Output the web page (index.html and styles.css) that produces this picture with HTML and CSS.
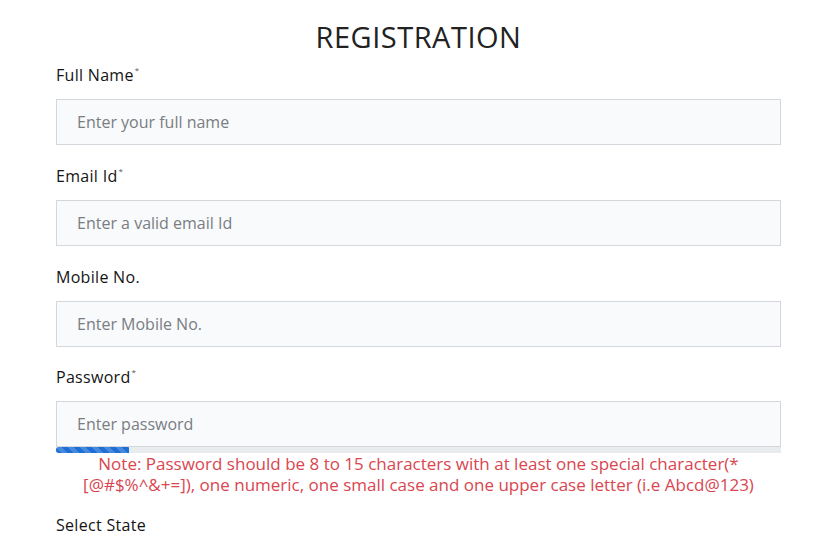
FILE: index.html
```html
<!DOCTYPE html>
<html lang="en">
<head>
<meta charset="utf-8">
<title>Registration</title>
<link rel="stylesheet" href="styles.css">
</head>
<body>
<main class="page">
  <h1 class="title">REGISTRATION</h1>
  <form class="form">
    <div class="field">
      <label class="label" for="fullname">Full Name<sup class="req">*</sup></label>
      <input class="input" id="fullname" type="text" placeholder="Enter your full name">
    </div>
    <div class="field">
      <label class="label" for="email">Email Id<sup class="req">*</sup></label>
      <input class="input" id="email" type="email" placeholder="Enter a valid email Id">
    </div>
    <div class="field">
      <label class="label" for="mobile">Mobile No.</label>
      <input class="input" id="mobile" type="text" placeholder="Enter Mobile No.">
    </div>
    <div class="field field-password">
      <label class="label" for="password">Password<sup class="req">*</sup></label>
      <input class="input" id="password" type="password" placeholder="Enter password">
      <div class="strength"><div class="strength-fill" style="width: 10%"></div></div>
      <p class="note">Note: Password should be 8 to 15 characters with at least one special character(*<br>[@#$%^&amp;+=]), one numeric, one small case and one upper case letter (i.e Abcd@123)</p>
    </div>
    <div class="field">
      <label class="label" for="state">Select State</label>
    </div>
  </form>
</main>
</body>
</html>
```

FILE: styles.css
```css
* {
  box-sizing: border-box;
}

body {
  margin: 0;
  background: #ffffff;
  font-family: "Open Sans", "Liberation Sans", sans-serif;
  color: #1d1d1f;
}

.page {
  width: 725px;
  margin-left: 56px;
}

.title {
  margin: 19px 0 9px;
  font-size: 29px;
  line-height: 36px;
  font-weight: 400;
  text-align: center;
  letter-spacing: 0.5px;
  color: #222;
}

.form {
  display: flex;
  flex-direction: column;
  gap: 20px;
}

.field {
  display: flex;
  flex-direction: column;
}

.field-password {
  margin-top: -1px;
}

.label {
  font-size: 16px;
  line-height: 22px;
  letter-spacing: 0.3px;
  margin-bottom: 13px;
  color: #141414;
}

.req {
  font-size: 8px;
  vertical-align: top;
  line-height: 12px;
  margin-left: 1px;
  color: #555;
}

.input {
  height: 46px;
  padding: 0 20px;
  border: 1px solid #d4d7db;
  background: #f8fafc;
  font-family: inherit;
  font-size: 16px;
  color: #333;
  outline: none;
}

.input::placeholder {
  color: #7a7d82;
}

.strength {
  height: 6px;
  background: #e9ecef;
}

.strength-fill {
  height: 100%;
  border-radius: 3px 0 0 3px;
  background-color: #1d6fd6;
  background-image: linear-gradient(45deg, rgba(255,255,255,.18) 25%, transparent 25%, transparent 50%, rgba(255,255,255,.18) 50%, rgba(255,255,255,.18) 75%, transparent 75%, transparent);
  background-size: 12px 12px;
}

.note {
  margin: 0 0 -1px;
  font-size: 17px;
  line-height: 21px;
  text-align: center;
  color: #d9464f;
}
```
